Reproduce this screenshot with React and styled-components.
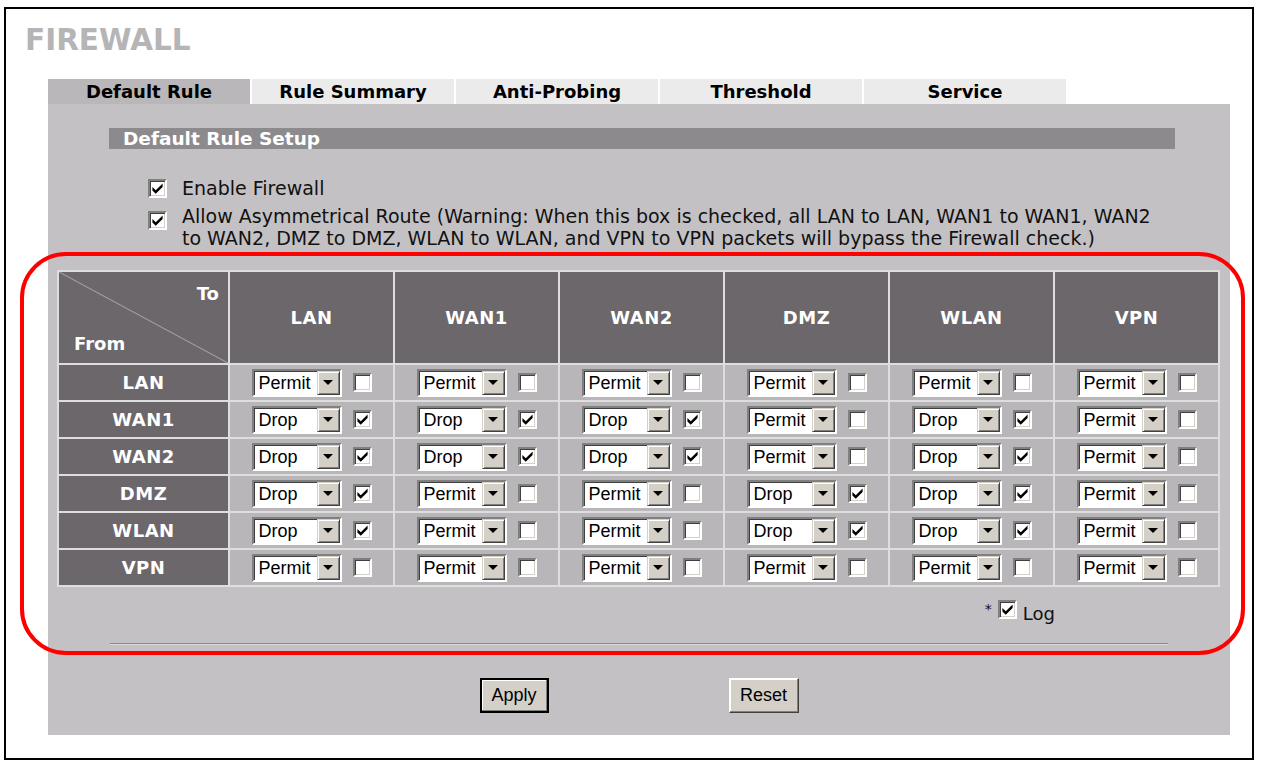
import styled, { createGlobalStyle } from "styled-components"

const GlobalStyle = createGlobalStyle`
  html, body {
    margin: 0;
    padding: 0;
    background: #fff;
  }
  body {
    font-family: "DejaVu Sans", Verdana, sans-serif;
  }
`

const Frame = styled.div`
  box-sizing: border-box;
  width: 1250px;
  height: 753px;
  margin: 7px 0 0 4px;
  border: 2px solid #000;
  padding: 16px 0 0 19px;
  background: #fff;
`

const Title = styled.h1`
  margin: 0;
  font-size: 29.5px;
  line-height: 30px;
  font-weight: bold;
  color: #b5b5b5;
`

const Content = styled.div`
  margin: 24px 0 0 23px;
`

const TabBar = styled.div`
  display: flex;
  gap: 2px;
  height: 25px;
`

const Tab = styled.div`
  width: 202px;
  background: ${p => (p.$active ? "#b9b7b9" : "#ebebeb")};
  color: #000;
  font-size: 18px;
  font-weight: bold;
  line-height: 25px;
  text-align: center;
`

const Panel = styled.div`
  box-sizing: border-box;
  width: 1182px;
  height: 631px;
  padding-top: 24px;
  background: #c4c1c4;
`

const SectionBar = styled.div`
  margin: 0 55px 0 61px;
  height: 21px;
  padding-left: 14px;
  background: #8d8a8d;
  color: #fff;
  font-size: 18.5px;
  font-weight: bold;
  line-height: 21px;
`

const Options = styled.div`
  display: flex;
  flex-direction: column;
  gap: 6px;
  margin: 28px 0 0 100px;
`

const OptionRow = styled.div`
  display: flex;
  align-items: flex-start;
  gap: 15px;
`

const OptionText = styled.span`
  font-size: 19px;
  line-height: 22px;
  color: #111;
  white-space: nowrap;
`

const BoxWrap = styled.span`
  flex: none;
  display: inline-flex;
  margin-top: ${p => p.$top || 0}px;
`

const Box = styled.span`
  box-sizing: border-box;
  width: 19px;
  height: 19px;
  background: #fff;
  border: 2px solid;
  border-color: #808080 #fff #fff #808080;
  box-shadow: inset 1px 1px 0 #404040, inset -1px -1px 0 #d4d0c8;
  display: inline-flex;
  align-items: center;
  justify-content: center;
`

function Check({ checked, top }) {
  return (
    <BoxWrap $top={top}>
      <Box>
        {checked && (
          <svg width="13" height="13" viewBox="0 0 12 12">
            <polygon points="1.3,4.6 4.4,7.6 10.7,1.4 10.7,4.6 4.4,10.9 1.3,7.8" fill="#000" />
          </svg>
        )}
      </Box>
    </BoxWrap>
  )
}

const Highlight = styled.div`
  position: relative;
  margin-top: 21px;
  padding: 0 10px 0 9px;
`

const RedFrame = styled.div`
  position: absolute;
  left: -28px;
  right: -15px;
  top: -18px;
  bottom: -10px;
  border: 4px solid #f00;
  border-radius: 46px;
  pointer-events: none;
`

const Grid = styled.div`
  display: grid;
  grid-template-columns: 169px repeat(6, 1fr);
  grid-template-rows: 91px repeat(6, 35px);
  gap: 2px;
  border: 2px solid #dedede;
  background: #dedede;
`

const HeadCell = styled.div`
  background: #6b676b;
  color: #fff;
  font-size: 18px;
  font-weight: bold;
  letter-spacing: 0.5px;
  display: flex;
  align-items: center;
  justify-content: center;
`

const Corner = styled.div`
  position: relative;
  background: #6b676b;
  color: #fff;
  font-size: 18px;
  font-weight: bold;
  display: flex;
  flex-direction: column;
  justify-content: space-between;
  padding: 11px 9px 9px 15px;
`

const CornerTo = styled.span`
  align-self: flex-end;
`

const Diagonal = styled.svg`
  position: absolute;
  inset: 0;
  width: 100%;
  height: 100%;
`

const Cell = styled.div`
  background: #b9b6b9;
  display: flex;
  align-items: center;
  justify-content: center;
  gap: 11px;
`

const Combo = styled.div`
  box-sizing: border-box;
  display: flex;
  width: 90px;
  height: 28px;
  background: #fff;
  border: 2px solid;
  border-color: #808080 #fff #fff #808080;
  box-shadow: inset 1px 1px 0 #404040;
`

const ComboText = styled.span`
  flex: 1;
  padding: 1px 0 0 5px;
  font-family: "Liberation Sans", Arial, sans-serif;
  font-size: 18px;
  line-height: 23px;
  color: #000;
`

const ComboButton = styled.span`
  box-sizing: border-box;
  width: 23px;
  background: #d4d0c8;
  border: 1px solid;
  border-color: #d4d0c8 #404040 #404040 #d4d0c8;
  box-shadow: inset 1px 1px 0 #fff, inset -1px -1px 0 #808080;
  display: flex;
  align-items: center;
  justify-content: center;

  &::after {
    content: "";
    border-left: 5px solid transparent;
    border-right: 5px solid transparent;
    border-top: 5px solid #000;
  }
`

function Combobox({ value }) {
  return (
    <Combo>
      <ComboText>{value}</ComboText>
      <ComboButton />
    </Combo>
  )
}

const LogRow = styled.div`
  display: flex;
  align-items: center;
  justify-content: flex-end;
  height: 44px;
  padding-right: 165px;
  font-size: 18px;
  color: #111;
`

const Star = styled.span`
  margin-right: 6px;
  font-size: 14px;
`

const LogLabel = styled.span`
  margin: 9px 0 0 6px;
`

const Divider = styled.div`
  margin: 12px 52px 0 53px;
  height: 1px;
  background: #8a878a;
  border-bottom: 1px solid #dcdadc;
`

const Buttons = styled.div`
  display: flex;
  justify-content: center;
  gap: 180px;
  margin-top: 33px;
`

const Button = styled.button`
  box-sizing: border-box;
  width: ${p => p.$w}px;
  height: 35px;
  padding: 0;
  background: #d4d0c8;
  font-family: "Liberation Sans", Arial, sans-serif;
  font-size: 18px;
  color: #000;
  border: ${p => (p.$primary ? "2px solid #000" : "1px solid #404040")};
  border-top-color: ${p => (p.$primary ? "#000" : "#fff")};
  border-left-color: ${p => (p.$primary ? "#000" : "#fff")};
  box-shadow: inset -1px -1px 0 #808080, inset 1px 1px 0 #fff;
`

const zones = ["LAN", "WAN1", "WAN2", "DMZ", "WLAN", "VPN"]

const tabs = ["Default Rule", "Rule Summary", "Anti-Probing", "Threshold", "Service"]

// D = drop + log, P = permit
const rules = [
  "PPPPPP",
  "DDDPDP",
  "DDDPDP",
  "DPPDDP",
  "DPPDDP",
  "PPPPPP",
]

export default function App() {
  return (
    <>
      <GlobalStyle />
      <Frame>
        <Title>FIREWALL</Title>
        <Content>
          <TabBar>
            {tabs.map((t, i) => (
              <Tab key={t} $active={i === 0}>{t}</Tab>
            ))}
          </TabBar>
          <Panel>
            <SectionBar>Default Rule Setup</SectionBar>
            <Options>
              <OptionRow>
                <Check checked top={2} />
                <OptionText>Enable Firewall</OptionText>
              </OptionRow>
              <OptionRow>
                <Check checked top={6} />
                <OptionText>
                  Allow Asymmetrical Route (Warning: When this box is checked, all LAN to LAN, WAN1 to WAN1, WAN2
                  <br />
                  to WAN2, DMZ to DMZ, WLAN to WLAN, and VPN to VPN packets will bypass the Firewall check.)
                </OptionText>
              </OptionRow>
            </Options>
            <Highlight>
              <Grid>
                <Corner>
                  <Diagonal viewBox="0 0 100 100" preserveAspectRatio="none">
                    <line x1="0" y1="0" x2="100" y2="100" stroke="#a8a5a8" strokeWidth="1" vectorEffect="non-scaling-stroke" />
                  </Diagonal>
                  <CornerTo>To</CornerTo>
                  <span>From</span>
                </Corner>
                {zones.map(z => (
                  <HeadCell key={z}>{z}</HeadCell>
                ))}
                {zones.map((from, r) => [
                  <HeadCell key={from}>{from}</HeadCell>,
                  ...zones.map((to, c) => {
                    const drop = rules[r][c] === "D"
                    return (
                      <Cell key={from + to}>
                        <Combobox value={drop ? "Drop" : "Permit"} />
                        <Check checked={drop} />
                      </Cell>
                    )
                  }),
                ])}
              </Grid>
              <LogRow>
                <Star>*</Star>
                <Check checked />
                <LogLabel>Log</LogLabel>
              </LogRow>
              <Divider />
              <RedFrame />
            </Highlight>
            <Buttons>
              <Button $primary $w={69}>Apply</Button>
              <Button $w={70}>Reset</Button>
            </Buttons>
          </Panel>
        </Content>
      </Frame>
    </>
  )
}
